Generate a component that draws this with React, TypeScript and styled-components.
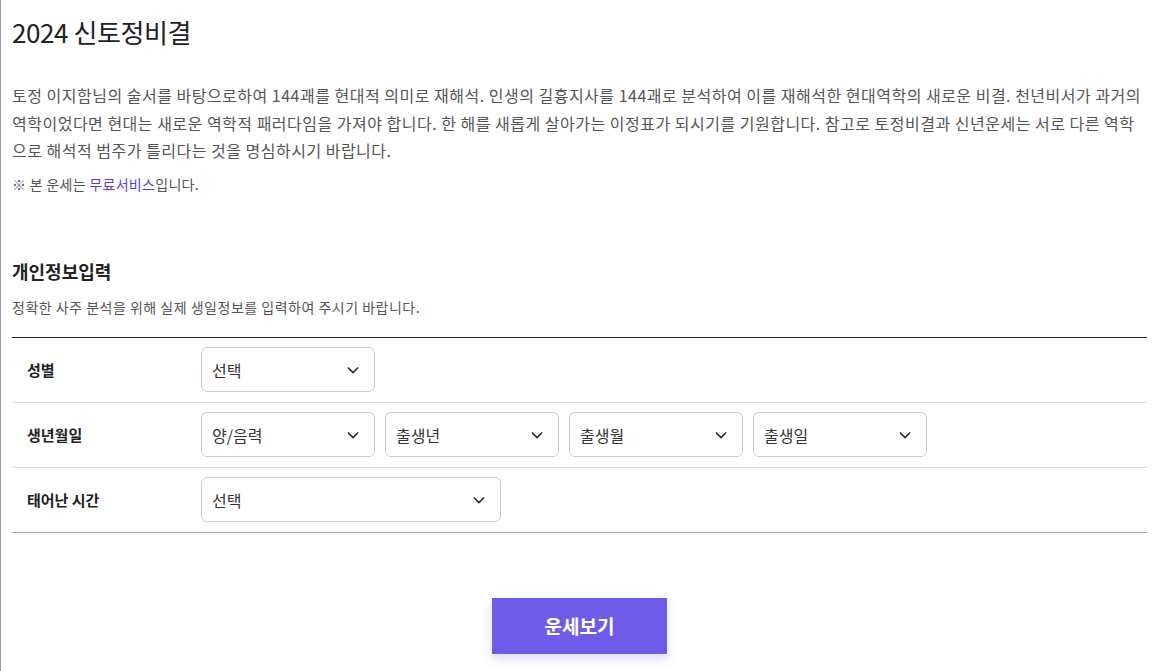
import React from 'react'
import styled, { createGlobalStyle } from 'styled-components'

const GlobalStyle = createGlobalStyle`
  body {
    margin: 0;
    background: #ffffff;
    font-family: 'Noto Sans CJK KR', 'Noto Sans', sans-serif;
    color: #222;
  }
`

const Page = styled.div`
  min-height: 671px;
  box-sizing: border-box;
  border-left: 1px solid #9a9a9a;
  padding: 14px 21px 0 11px;
`

const Title = styled.h1`
  margin: 0;
  font-size: 26px;
  line-height: 36px;
  font-weight: 400;
  letter-spacing: -0.4px;
  color: #222;
`

const Intro = styled.p`
  margin: 32px 0 0;
  font-size: 16px;
  line-height: 27.5px;
  color: #555;
  letter-spacing: 0.5px;
`

const Notice = styled.p`
  margin: 9px 0 0;
  font-size: 14px;
  line-height: 20px;
  letter-spacing: 0.3px;
  color: #555;

  a {
    color: #5a3fd4;
    text-decoration: none;
  }
`

const SectionTitle = styled.h2`
  margin: 65px 0 0;
  font-size: 18px;
  line-height: 24px;
  font-weight: 700;
  color: #222;
`

const SectionDesc = styled.p`
  margin: 14px 0 0;
  font-size: 14px;
  line-height: 20px;
  letter-spacing: 0.5px;
  color: #555;
`

const Form = styled.div`
  margin-top: 20px;
  border-top: 1px solid #222;
`

const Row = styled.div<{ $last?: boolean }>`
  display: flex;
  align-items: center;
  height: 64px;
  border-bottom: 1px solid ${({ $last }) => ($last ? '#aaa' : '#ddd')};
`

const Label = styled.div`
  width: 174px;
  padding-left: 15px;
  font-size: 15px;
  font-weight: 700;
  color: #222;
`

const Fields = styled.div`
  display: flex;
  gap: 10px;
`

const Select = styled.div<{ $wide?: boolean }>`
  box-sizing: border-box;
  width: ${({ $wide }) => ($wide ? '300px' : '174px')};
  height: 45px;
  display: flex;
  align-items: center;
  justify-content: space-between;
  padding: 0 13px 0 10px;
  border: 1px solid #ccc;
  border-radius: 6px;
  font-size: 16px;
  color: #333;
  background: #fff;
`

const Chevron = () => (
  <svg width="16" height="16" viewBox="0 0 24 24" fill="none" stroke="#333" strokeWidth="2.6" strokeLinecap="round" strokeLinejoin="round">
    <path d="M5 9l7 7 7-7" />
  </svg>
)

const Dropdown: React.FC<{ label: string; wide?: boolean }> = ({ label, wide }) => (
  <Select $wide={wide}>
    <span>{label}</span>
    <Chevron />
  </Select>
)

const ButtonWrap = styled.div`
  display: flex;
  justify-content: center;
  margin-top: 65px;
`

const SubmitButton = styled.button`
  width: 175px;
  height: 56px;
  border: none;
  background: #6e5ce8;
  color: #fff;
  font-family: inherit;
  font-size: 19px;
  font-weight: 700;
  box-shadow: 0 4px 10px rgba(110, 92, 232, 0.25);
  cursor: pointer;
`

const App: React.FC = () => {
  return (
    <>
      <GlobalStyle />
      <Page>
        <Title>2024 신토정비결</Title>
        <Intro>
          토정 이지함님의 술서를 바탕으로하여 144괘를 현대적 의미로 재해석. 인생의 길흉지사를 144괘로 분석하여 이를 재해석한 현대역학의 새로운 비결. 천년비서가 과거의 역학이었다면 현대는 새로운 역학적 패러다임을 가져야 합니다. 한 해를 새롭게 살아가는 이정표가 되시기를 기원합니다. 참고로 토정비결과 신년운세는 서로 다른 역학으로 해석적 범주가 틀리다는 것을 명심하시기 바랍니다.
        </Intro>
        <Notice>
          ※ 본 운세는 <a href="#">무료서비스</a>입니다.
        </Notice>

        <SectionTitle>개인정보입력</SectionTitle>
        <SectionDesc>정확한 사주 분석을 위해 실제 생일정보를 입력하여 주시기 바랍니다.</SectionDesc>

        <Form>
          <Row>
            <Label>성별</Label>
            <Fields>
              <Dropdown label="선택" />
            </Fields>
          </Row>
          <Row>
            <Label>생년월일</Label>
            <Fields>
              <Dropdown label="양/음력" />
              <Dropdown label="출생년" />
              <Dropdown label="출생월" />
              <Dropdown label="출생일" />
            </Fields>
          </Row>
          <Row $last>
            <Label>태어난 시간</Label>
            <Fields>
              <Dropdown label="선택" wide />
            </Fields>
          </Row>
        </Form>

        <ButtonWrap>
          <SubmitButton>운세보기</SubmitButton>
        </ButtonWrap>
      </Page>
    </>
  )
}

export default App
